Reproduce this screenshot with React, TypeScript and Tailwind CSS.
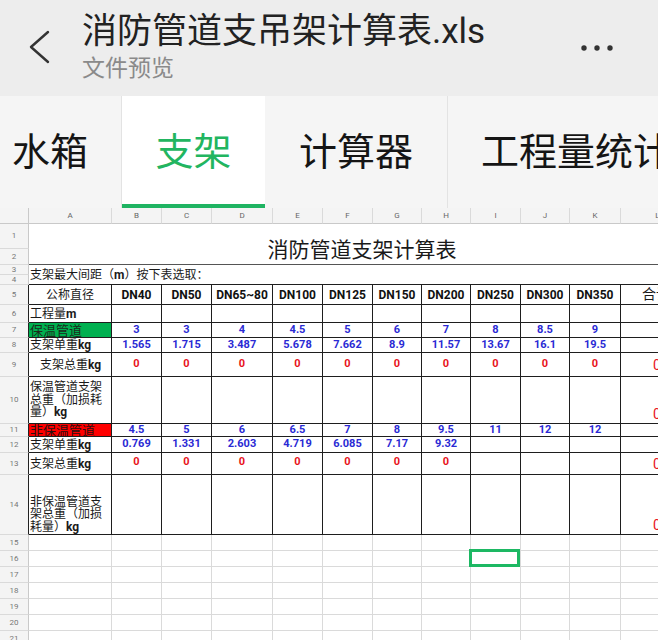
import React from "react";

const BLUE = "text-[#2a2ad4]";
const RED = "text-[#e8141b]";

const letters = ["A", "B", "C", "D", "E", "F", "G", "H", "I", "J", "K", "L"];
const dn = ["DN40", "DN50", "DN65~80", "DN100", "DN125", "DN150", "DN200", "DN250", "DN300", "DN350"];
const r7 = ["3", "3", "4", "4.5", "5", "6", "7", "8", "8.5", "9"];
const r8 = ["1.565", "1.715", "3.487", "5.678", "7.662", "8.9", "11.57", "13.67", "16.1", "19.5"];
const r9 = ["0", "0", "0", "0", "0", "0", "0", "0", "0", "0"];
const r11 = ["4.5", "5", "6", "6.5", "7", "8", "9.5", "11", "12", "12"];
const r12 = ["0.769", "1.331", "2.603", "4.719", "6.085", "7.17", "9.32", "", "", ""];
const r13 = ["0", "0", "0", "0", "0", "0", "0", "", "", ""];
const empty10 = ["", "", "", "", "", "", "", "", "", ""];

const CJK = "font-['Roboto','Noto_Sans_CJK_SC',sans-serif]";

function RowHead({ n, dark }: { n: number; dark?: boolean }) {
  return (
    <div
      className={`flex items-center justify-center bg-[#f4f4f4] border-b border-r border-b-[#dadada] text-[8px] leading-none text-[#777] ${
        dark ? "border-r-[#222]" : "border-r-[#c9c9c9]"
      }`}
    >
      {n}
    </div>
  );
}

function DataCell({ children, cls = "" }: { children?: React.ReactNode; cls?: string }) {
  return (
    <div className={`flex items-center justify-center border-b border-r border-[#1e1e1e] overflow-hidden ${cls}`}>
      {children}
    </div>
  );
}

function ValueRow({
  n,
  label,
  values,
  color,
  lastVal,
  lastBottom,
  labelCls = "",
  valueCls = "",
}: {
  n: number;
  label: React.ReactNode;
  values: string[];
  color: string;
  lastVal?: string;
  lastBottom?: boolean;
  labelCls?: string;
  valueCls?: string;
}) {
  return (
    <>
      <RowHead n={n} dark />
      <div className={`flex border-b border-r border-[#1e1e1e] overflow-hidden text-[12px] text-[#1a1a1a] ${labelCls}`}>
        {label}
      </div>
      {values.map((v, i) => (
        <DataCell key={i}>
          <span className={`text-[11px] font-bold font-['Roboto',sans-serif] ${color} ${valueCls}`}>{v}</span>
        </DataCell>
      ))}
      <div
        className={`flex border-b border-r border-[#1e1e1e] overflow-hidden pl-[32px] ${
          lastBottom ? "items-end pb-[2px]" : "items-center"
        }`}
      >
        {lastVal ? <span className={`text-[14px] leading-none font-['Roboto',sans-serif] ${RED}`}>{lastVal}</span> : null}
      </div>
    </>
  );
}

export default function App() {
  return (
    <div className={`w-[658px] h-[640px] overflow-hidden bg-white ${CJK}`}>
      {/* Header */}
      <div className="h-[96px] bg-[#ededed] flex items-center">
        <div className="w-[82px] h-full flex items-center pl-[29px]">
          <svg width="22" height="34" viewBox="0 0 22 34" className="mt-[-2px]">
            <polyline points="19,2 2,17 19,32" fill="none" stroke="#333" strokeWidth="2.4" strokeLinecap="round" strokeLinejoin="round" />
          </svg>
        </div>
        <div className="flex-1 h-full flex flex-col pt-[12px]">
          <div className="text-[35px] leading-[40px] text-[#222] whitespace-nowrap">消防管道支吊架计算表.xls</div>
          <div className="text-[23px] leading-[30px] text-[#8a8a8a] mt-[2px]">文件预览</div>
        </div>
        <div className="w-[82px] h-full flex items-center pl-[4px]">
          <svg width="40" height="10" viewBox="0 0 40 10">
            <circle cx="4" cy="5" r="2.7" fill="#333" />
            <circle cx="17" cy="5" r="2.7" fill="#333" />
            <circle cx="30" cy="5" r="2.7" fill="#333" />
          </svg>
        </div>
      </div>

      {/* Tabs */}
      <div className="h-[112px] bg-[#f5f5f5] flex text-[38px] leading-none text-[#151515] whitespace-nowrap">
        <div className="w-[122px] shrink-0 flex items-center pl-[12px] border-r border-[#e3e3e3]">水箱</div>
        <div className="w-[143px] shrink-0 flex items-center justify-center bg-white border-b-[4px] border-[#1fb462] pt-[4px] text-[#22b560]">
          支架
        </div>
        <div className="w-[183px] shrink-0 flex items-center justify-center border-r border-[#e3e3e3]">计算器</div>
        <div className="shrink-0 flex items-center pl-[33px]">工程量统计</div>
      </div>

      {/* Sheet */}
      <div className="grid grid-cols-[29px_83px_50px_50px_61px_50px_50px_49px_49px_50px_49px_51px_74px] grid-rows-[16px_25px_16px_10px_10px_20px_18px_15px_15px_24px_47px_13px_16px_22px_60px_16px_16px_16px_16px_16px_16px_16px]">
        {/* column header */}
        <div className="bg-[#f4f4f4] border-b border-r border-[#c9c9c9]" />
        {letters.map((l) => (
          <div
            key={l}
            className="flex items-center justify-center bg-[#f4f4f4] border-b border-r border-b-[#c9c9c9] border-r-[#dadada] text-[8px] leading-none text-[#666]"
          >
            {l}
          </div>
        ))}

        {/* rows 1-2 title */}
        <RowHead n={1} />
        <div className="col-span-12 row-span-2 flex items-end justify-center pb-[1px] border-b border-[#555] text-[21px] leading-[26px] text-[#1a1a1a]">
          消防管道支架计算表
        </div>
        <RowHead n={2} />

        {/* rows 3-4 */}
        <RowHead n={3} />
        <div className="col-span-12 row-span-2 flex items-end pl-[1px] pb-[1px] border-b border-[#1e1e1e] text-[12px] leading-[15px] text-[#1a1a1a] whitespace-nowrap">
          支架最大间距（<b className="font-bold font-['Roboto',sans-serif]">m</b>）按下表选取：
        </div>
        <RowHead n={4} />

        {/* row 5 */}
        <RowHead n={5} dark />
        <DataCell cls="text-[12px] text-[#1a1a1a]">公称直径</DataCell>
        {dn.map((d) => (
          <DataCell key={d}>
            <span className="text-[12px] font-bold font-['Roboto',sans-serif] text-[#111]">{d}</span>
          </DataCell>
        ))}
        <div className="flex items-center border-b border-r border-[#1e1e1e] pl-[21px] text-[14px] text-[#1a1a1a] whitespace-nowrap overflow-hidden">
          合计
        </div>

        {/* row 6 */}
        <ValueRow
          n={6}
          label={
            <span className="self-center pl-[1px] leading-none">
              工程量<b className="font-bold font-['Roboto',sans-serif]">m</b>
            </span>
          }
          values={empty10}
          color={BLUE}
        />

        {/* row 7 */}
        <ValueRow
          n={7}
          label={<span className="w-full h-full bg-[#00b050] flex items-center pl-[1px] leading-none text-[13px] text-[#1c2a1c]">保温管道</span>}
          values={r7}
          color={BLUE}
        />

        {/* row 8 */}
        <ValueRow
          n={8}
          label={
            <span className="self-center pl-[1px] leading-none">
              支架单重<b className="font-bold font-['Roboto',sans-serif]">kg</b>
            </span>
          }
          values={r8}
          color={BLUE}
        />

        {/* row 9 */}
        <ValueRow
          n={9}
          label={
            <span className="self-center pl-[11px] leading-none">
              支架总重<b className="font-bold font-['Roboto',sans-serif]">kg</b>
            </span>
          }
          values={r9}
          color={RED}
          lastVal="0"
        />

        {/* row 10 */}
        <ValueRow
          n={10}
          label={
            <span className="self-center pl-[1px] leading-[12.5px]">
              保温管道支架
              <br />
              总重（加损耗
              <br />
              量）<b className="font-bold font-['Roboto',sans-serif]">kg</b>
            </span>
          }
          values={empty10}
          color={BLUE}
          lastVal="0"
          lastBottom
        />

        {/* row 11 */}
        <ValueRow
          n={11}
          label={<span className="w-full h-full bg-[#ff0000] flex items-center pl-[1px] leading-none text-[13px] text-[#2a1010]">非保温管道</span>}
          values={r11}
          color={BLUE}
        />

        {/* row 12 */}
        <ValueRow
          n={12}
          label={
            <span className="self-center pl-[1px] leading-none">
              支架单重<b className="font-bold font-['Roboto',sans-serif]">kg</b>
            </span>
          }
          values={r12}
          color={BLUE}
        />

        {/* row 13 */}
        <ValueRow
          n={13}
          label={
            <span className="self-center pl-[1px] leading-none">
              支架总重<b className="font-bold font-['Roboto',sans-serif]">kg</b>
            </span>
          }
          values={r13}
          color={RED}
          lastVal="0"
          valueCls="-mt-[3px]"
        />

        {/* row 14 */}
        <ValueRow
          n={14}
          label={
            <span className="self-end pl-[1px] pb-[1px] leading-[12.5px]">
              非保温管道支
              <br />
              架总重（加损
              <br />
              耗量）<b className="font-bold font-['Roboto',sans-serif]">kg</b>
            </span>
          }
          values={empty10}
          color={BLUE}
          lastVal="0"
          lastBottom
        />

        {/* rows 15-21 */}
        {[15, 16, 17, 18, 19, 20, 21].map((n) => (
          <React.Fragment key={n}>
            <RowHead n={n} />
            {letters.map((l) => (
              <div key={l} className="relative border-b border-r border-[#dadada]">
                {n === 16 && l === "I" ? (
                  <div className="absolute -left-[2px] -top-[2px] w-[51px] h-[18px] border-[3px] border-[#1db863]" />
                ) : null}
              </div>
            ))}
          </React.Fragment>
        ))}
      </div>
    </div>
  );
}
